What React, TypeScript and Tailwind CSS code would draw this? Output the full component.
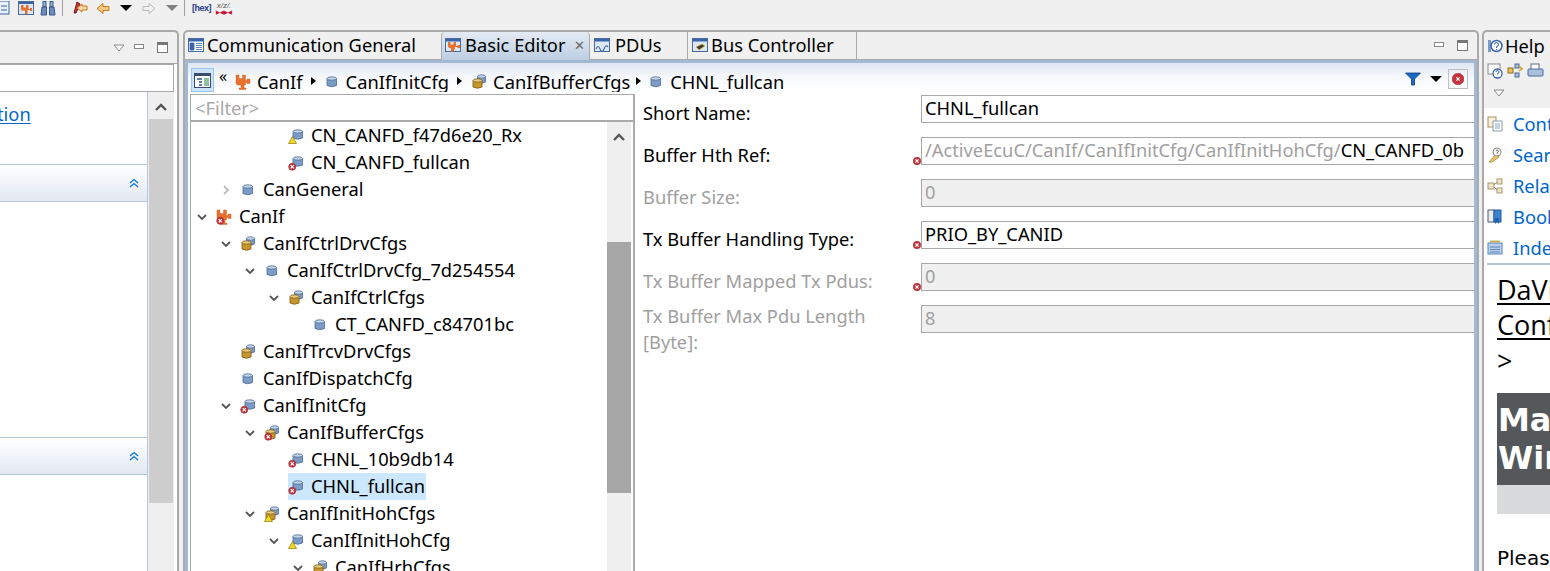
import React from 'react';

type IconKind = 'cyl' | 'multi' | 'module';
type Overlay = 'err' | 'warn' | undefined;

function ErrorDot({ x = 0, y = 8, size = 8 }: { x?: number; y?: number; size?: number }) {
  const c = size / 2;
  return (
    <g transform={`translate(${x} ${y})`}>
      <circle cx={c} cy={c} r={c - 0.2} fill="#c8323c" stroke="#9c2a32" strokeWidth="0.6" />
      <path d={`M${c - 1.6} ${c - 1.6}L${c + 1.6} ${c + 1.6}M${c + 1.6} ${c - 1.6}L${c - 1.6} ${c + 1.6}`} stroke="#fff" strokeWidth="1.2" />
    </g>
  );
}

function Cylinder({ x, y, w, h, body, top, line }: { x: number; y: number; w: number; h: number; body: string; top: string; line: string }) {
  return (
    <g>
      <path d={`M${x} ${y + 1.5}V${y + h - 1.5}Q${x + w / 2} ${y + h + 1} ${x + w} ${y + h - 1.5}V${y + 1.5}`} fill={body} stroke={line} strokeWidth="0.8" />
      <ellipse cx={x + w / 2} cy={y + 1.5} rx={w / 2} ry="1.7" fill={top} stroke={line} strokeWidth="0.8" />
    </g>
  );
}

function NodeIcon({ kind, overlay }: { kind: IconKind; overlay?: Overlay }) {
  return (
    <svg width="16" height="16" viewBox="0 0 16 16" className="shrink-0">
      {kind === 'cyl' && (
        overlay
          ? <Cylinder x={5} y={2} w={9.5} h={9.5} body="#7c9cc8" top="#c4d4e8" line="#4c6a94" />
          : <Cylinder x={3} y={3} w={9.5} h={10} body="#7c9cc8" top="#c4d4e8" line="#4c6a94" />
      )}
      {kind === 'multi' && (
        <>
          <Cylinder x={6.5} y={1} w={8} h={8.5} body="#7c9cc8" top="#c4d4e8" line="#4c6a94" />
          <Cylinder x={2} y={5} w={9} h={9.5} body="#c8962c" top="#e8cc7c" line="#7c5a14" />
        </>
      )}
      {kind === 'module' && (
        <path d="M1 1h3v3.500h3.500V1h3v5.500h1.500V5H15v4.500h-3V8.500h-1.500V11H9v3h2v1.500H4V14h2v-3H3a2 2 0 0 1-2-2Z" fill="#e8702c" stroke="#d06020" strokeWidth="0.4" />
      )}
      {overlay === 'err' && <ErrorDot x={0.5} y={8} size={7.5} />}
      {overlay === 'warn' && (
        <path d="M4.5 8.5L8.5 15.5H0.5Z" fill="#f4d820" stroke="#8c7a10" strokeWidth="0.7" />
      )}
    </svg>
  );
}

function Chevron({ open }: { open: boolean }) {
  return (
    <svg width="16" height="16" viewBox="0 0 16 16" className="shrink-0">
      {open
        ? <path d="M4 6l4 4 4-4" fill="none" stroke="#555" strokeWidth="1.8" />
        : <path d="M6 4l4 4-4 4" fill="none" stroke="#bbb" strokeWidth="1.8" />}
    </svg>
  );
}

const treeRows: { depth: number; label: string; icon: IconKind; overlay?: Overlay; arrow?: 'open' | 'closed'; selected?: boolean }[] = [
  { depth: 3, label: 'CN_CANFD_f47d6e20_Rx', icon: 'cyl', overlay: 'warn' },
  { depth: 3, label: 'CN_CANFD_fullcan', icon: 'cyl', overlay: 'err' },
  { depth: 1, label: 'CanGeneral', icon: 'cyl', arrow: 'closed' },
  { depth: 0, label: 'CanIf', icon: 'module', overlay: 'err', arrow: 'open' },
  { depth: 1, label: 'CanIfCtrlDrvCfgs', icon: 'multi', arrow: 'open' },
  { depth: 2, label: 'CanIfCtrlDrvCfg_7d254554', icon: 'cyl', arrow: 'open' },
  { depth: 3, label: 'CanIfCtrlCfgs', icon: 'multi', arrow: 'open' },
  { depth: 4, label: 'CT_CANFD_c84701bc', icon: 'cyl' },
  { depth: 1, label: 'CanIfTrcvDrvCfgs', icon: 'multi' },
  { depth: 1, label: 'CanIfDispatchCfg', icon: 'cyl' },
  { depth: 1, label: 'CanIfInitCfg', icon: 'cyl', overlay: 'err', arrow: 'open' },
  { depth: 2, label: 'CanIfBufferCfgs', icon: 'multi', overlay: 'err', arrow: 'open' },
  { depth: 3, label: 'CHNL_10b9db14', icon: 'cyl', overlay: 'err' },
  { depth: 3, label: 'CHNL_fullcan', icon: 'cyl', overlay: 'err', selected: true },
  { depth: 2, label: 'CanIfInitHohCfgs', icon: 'multi', overlay: 'warn', arrow: 'open' },
  { depth: 3, label: 'CanIfInitHohCfg', icon: 'cyl', overlay: 'warn', arrow: 'open' },
  { depth: 4, label: 'CanIfHrhCfgs', icon: 'multi', arrow: 'open' },
];

// tree indent is one of these per depth, 24px each
const indentClass = ['pl-[3px]', 'pl-[27px]', 'pl-[51px]', 'pl-[75px]', 'pl-[99px]'];

const fields: { label: string; disabled?: boolean; error?: boolean; value?: string; ref?: boolean; twoLine?: boolean }[] = [
  { label: 'Short Name:', value: 'CHNL_fullcan' },
  { label: 'Buffer Hth Ref:', error: true, ref: true },
  { label: 'Buffer Size:', disabled: true, value: '0' },
  { label: 'Tx Buffer Handling Type:', error: true, value: 'PRIO_BY_CANID' },
  { label: 'Tx Buffer Mapped Tx Pdus:', disabled: true, error: true, value: '0' },
  { label: 'Tx Buffer Max Pdu Length [Byte]:', disabled: true, value: '8', twoLine: true },
];

function ViewMenu() {
  return (
    <svg width="12" height="8" viewBox="0 0 12 8" className="shrink-0">
      <path d="M1 1h10L6 7Z" fill="#fff" stroke="#888" />
    </svg>
  );
}

function WindowButtons() {
  return (
    <div className="flex items-center gap-[13px]">
      <div className="w-[10px] h-[5px] border border-[#888] bg-white mb-[3px]" />
      <div className="w-[11px] h-[11px] border border-[#777] border-t-[3px] bg-white" />
    </div>
  );
}

function UpArrow() {
  return (
    <svg width="14" height="10" viewBox="0 0 14 10">
      <path d="M2 8l5-5 5 5" fill="none" stroke="#555" strokeWidth="2.4" />
    </svg>
  );
}

function TabIcon({ accent }: { accent: 'list' | 'module' | 'wave' | 'chip' }) {
  return (
    <svg width="16" height="16" viewBox="0 0 16 16" className="shrink-0">
      <rect x="0.5" y="1.5" width="15" height="13" fill={accent === 'list' ? '#fff' : '#dce8f6'} stroke="#4a6a9c" />
      <rect x="1" y="2" width="14" height="2.5" fill="#3a64ac" />
      {accent === 'list' && <path d="M2 6h4v7H2ZM8 6.5h6M8 8.5h6M8 10.5h6M8 12.5h6" fill="#3a64ac" stroke="#3a64ac" strokeWidth="0.8" />}
      {accent === 'module' && <path d="M3 5h2.500v2.500h3V5H11v4h1.500v-1H15v3h-2.500v-1H10v2H9v2.500H6V11H5a2 2 0 0 1-2-2Z" fill="#e8702c" />}
      {accent === 'wave' && <path d="M2 12q2-5 4 0t4 0 4-2" fill="none" stroke="#4a6a9c" strokeWidth="1.2" />}
      {accent === 'chip' && <path d="M4 10l6-3 3 2-6 4Z" fill="#3c3c3c" stroke="#e8c020" strokeWidth="0.7" />}
    </svg>
  );
}

function Crumb({ icon, label }: { icon: IconKind; label: string }) {
  return (
    <div className="flex items-center shrink-0 mt-px">
      <NodeIcon kind={icon} />
      <span className="ml-[6px]">{label}</span>
    </div>
  );
}

function CrumbArrow({ className }: { className: string }) {
  return <div className={`w-0 h-0 border-y-[4px] border-y-transparent border-l-[5px] border-l-black shrink-0 ${className}`} />;
}

function SectionHeader() {
  return (
    <div className="h-[37px] shrink-0 flex items-center justify-end pr-[8px] bg-gradient-to-b from-white to-[#e2e9f3] border-b border-[#b4c8dc]">
      <svg width="10" height="10" viewBox="0 0 10 10">
        <path d="M1 5l4-3.5L9 5M1 9l4-3.5L9 9" fill="none" stroke="#0a78dc" strokeWidth="1.3" />
      </svg>
    </div>
  );
}

function HelpItemIcon({ name }: { name: string }) {
  return (
    <svg width="16" height="16" viewBox="0 0 16 16" className="shrink-0">
      {name === 'Contents' && (
        <>
          <rect x="1" y="1" width="8" height="10" fill="#f8f0dc" stroke="#a89060" />
          <rect x="6" y="5" width="9" height="10" fill="#fff" stroke="#8c9cb0" />
          <path d="M8 8h5M8 10h5M8 12h5" stroke="#8ca8c8" />
        </>
      )}
      {name === 'Search' && (
        <>
          <path d="M2 15L9 7l3 3-7 5Z" fill="#e8c870" stroke="#a88830" strokeWidth="0.8" />
          <circle cx="10" cy="5" r="4" fill="#fff" stroke="#8c8c7c" />
          <path d="M9 4a1.200 1.200 0 1 1 1.200 1.500V6.500" fill="none" stroke="#556" />
        </>
      )}
      {name === 'Related Topics' && (
        <>
          <rect x="1" y="5" width="6" height="6" fill="#f0e4c4" stroke="#a89870" />
          <rect x="10" y="1" width="5" height="5" fill="#f0e4c4" stroke="#a89870" />
          <rect x="10" y="10" width="5" height="5" fill="#f0e4c4" stroke="#a89870" />
          <path d="M7 7l3-3M7 9l3 3" stroke="#888" />
        </>
      )}
      {name === 'Bookmarks' && (
        <>
          <rect x="1" y="1" width="6" height="12" fill="#e8ecf0" stroke="#556" />
          <rect x="7" y="1" width="7" height="12" fill="#3a84d0" stroke="#285c98" />
          <path d="M8 9v6l2-2 2 2V9Z" fill="#1a64b8" />
        </>
      )}
      {name === 'Index' && (
        <>
          <rect x="1" y="3" width="14" height="11" fill="#b8d0ec" stroke="#5a84b8" />
          <path d="M3 1.500h10" stroke="#c8b060" strokeWidth="2" />
          <path d="M3 7h10M3 9.500h10M3 12h10" stroke="#5a84b8" />
        </>
      )}
    </svg>
  );
}

export default function App() {
  return (
    <div className="w-[1550px] h-[571px] overflow-hidden bg-[#f0f0f0] flex flex-col font-['Noto_Sans',sans-serif] text-[18.3px] text-black">
      {/* top toolbar, cut off by the screen edge */}
      <div className="h-[30px] shrink-0 flex items-start">
        <div className="flex items-center h-[16px]">
          <svg width="10" height="15" viewBox="0 0 10 15"><rect x="-4" y="0" width="13" height="13" fill="#e8f0fa" stroke="#3a64ac" /><path d="M1 5h6M1 9h6" stroke="#3a64ac" /></svg>
          <svg width="16" height="15" viewBox="0 0 16 15" className="ml-[8px]"><rect x="0.5" y="0.5" width="15" height="13" fill="#dce8f6" stroke="#4a6a9c" /><rect x="1" y="1" width="14" height="2" fill="#3a64ac" /><path d="M3 4h2.500v2.500h2.500V4h2.500v4H12V7h2v3h-2V9H9.500v4H7V9.500H3Z" fill="#e8702c" /></svg>
          <svg width="16" height="15" viewBox="0 0 16 15" className="ml-[6px]"><path d="M2 6h4.500v8H1ZM9.500 6H14l1 8H9.500Z" fill="#6a8cc0" stroke="#3a5a8c" /><rect x="3" y="0.5" width="3" height="5" fill="#9ab4d8" stroke="#3a5a8c" /><rect x="10" y="0.5" width="3" height="5" fill="#9ab4d8" stroke="#3a5a8c" /></svg>
          <div className="w-px h-[16px] bg-[#a0a0a0] ml-[6px]" />
          <svg width="17" height="15" viewBox="0 0 17 15" className="ml-[8px]"><path d="M3 12L6 1l3 2-4 9Z" fill="#c8323c" stroke="#7c1a20" /><path d="M6 7l5-4v2h5v4h-5v2Z" fill="#f8d8a0" stroke="#c87820" /></svg>
          <svg width="14" height="13" viewBox="0 0 14 13" className="ml-[8px]"><path d="M1 6.500l6-5v3h6v4H7v3Z" fill="#f8c880" stroke="#d07818" /></svg>
          <div className="ml-[10px] w-0 h-0 border-x-[6px] border-x-transparent border-t-[6px] border-t-black" />
          <svg width="14" height="13" viewBox="0 0 14 13" className="ml-[10px]"><path d="M13 6.500l-6-5v3H1v4h6v3Z" fill="#f0f0f0" stroke="#b8b8b8" /></svg>
          <div className="ml-[10px] w-0 h-0 border-x-[6px] border-x-transparent border-t-[6px] border-t-[#808080]" />
          <div className="w-px h-[16px] bg-[#a0a0a0] ml-[6px]" />
          <span className="ml-[7px] font-['Liberation_Sans',sans-serif] text-[9px] tracking-[-0.5px] leading-[14px] text-[#2a3a8c] font-bold whitespace-nowrap">[hex]</span>
          <div className="ml-[5px] flex flex-col items-center leading-none">
            <span className="font-['Liberation_Sans',sans-serif] italic text-[8px] leading-[9px] text-[#555]">x/z/.</span>
            <span className="text-[5px] leading-[5px] text-[#c01030] font-bold">▶◀▶◀</span>
          </div>
        </div>
      </div>

      <div className="flex-1 min-h-0 flex">
        {/* left view */}
        <div className="w-[179px] shrink-0 border-t-2 border-r-2 border-[#aaa] rounded-tr-[5px] flex flex-col">
          <div className="h-[31px] shrink-0 flex items-center justify-end pr-[9px] gap-[9px]">
            <ViewMenu />
            <WindowButtons />
          </div>
          <div className="flex-1 min-h-0 bg-white border-t border-[#a8a8a8] pr-[3px] flex flex-col">
            <div className="h-[28px] shrink-0 border border-[#a8a8a8] border-l-0 bg-white" />
            <div className="flex-1 min-h-0 flex">
              <div className="w-[148px] flex flex-col border-r border-[#b4c8dc]">
                <div className="h-[73px] shrink-0 border-b border-[#b4c8dc] pt-[9px] text-[#0066cc] leading-[26px]">
                  <span className="underline underline-offset-2 ml-[-3px]">tion</span>
                </div>
                <SectionHeader />
                <div className="h-[236px] shrink-0 border-b border-[#b4c8dc]" />
                <SectionHeader />
                <div className="flex-1" />
              </div>
              <div className="w-[26px] bg-[#efefef] flex flex-col">
                <div className="h-[27px] shrink-0 flex items-center justify-center pt-[2px]"><UpArrow /></div>
                <div className="h-[384px] shrink-0 bg-[#cdcdcd] mx-px" />
              </div>
            </div>
          </div>
        </div>

        {/* center editor */}
        <div className="w-[1296px] ml-[4px] shrink-0 border-t-2 border-x-2 border-[#aaa] rounded-t-[5px] flex flex-col">
          <div className="h-[28px] shrink-0 flex items-stretch leading-[26px]">
            <div className="w-[256px] flex items-center pb-[2px] pl-[3px] gap-[3px] border-b border-[#aaa]">
              <TabIcon accent="list" /><span>Communication General</span>
            </div>
            <div className="w-[149px] flex items-center pb-[2px] pl-[3px] gap-[4px] bg-gradient-to-b from-[#e4ebf4] to-[#bccee2] border-x border-[#aaa] rounded-t-[4px]">
              <TabIcon accent="module" /><span>Basic Editor</span>
              <span className="ml-[5px] text-[#666] text-[13px]">✕</span>
            </div>
            <div className="w-[97px] flex items-center pb-[2px] pl-[4px] gap-[5px] border-b border-[#aaa]">
              <TabIcon accent="wave" /><span>PDUs</span>
            </div>
            <div className="w-[170px] flex items-center pb-[2px] pl-[4px] gap-[3px] border-x border-b border-[#aaa]">
              <TabIcon accent="chip" /><span>Bus Controller</span>
            </div>
            <div className="flex-1 flex items-center justify-end pr-[9px] border-b border-[#aaa]">
              <WindowButtons />
            </div>
          </div>
          <div className="flex-1 min-h-0 flex flex-col bg-white border-x-[3px] border-t-[3px] border-[#a3b9d3]">
            {/* breadcrumb, its text is cut by the filter row in the real app */}
            <div className="h-[29px] mb-[2px] shrink-0 overflow-hidden bg-gradient-to-b from-[#dfe7f2] via-[#f6f8fb] to-white flex items-start pt-[5px] pl-[3px] pr-[6px] leading-[26px] whitespace-nowrap">
              <div className="w-[23px] h-[24px] shrink-0 bg-[#cde3f8] border border-[#9cc6ee] flex items-center justify-center">
                <svg width="17" height="15" viewBox="0 0 17 15"><rect x="0.500" y="0.500" width="16" height="14" fill="#fff" stroke="#3c4c6c" /><rect x="1" y="1" width="15" height="2" fill="#3c4c6c" /><path d="M3 5h5v2H3ZM5 8h3v2H5ZM5 11h3v2H5Z" fill="#5a7ca8" /><rect x="10" y="5" width="5" height="8" fill="#8cc0a0" /></svg>
              </div>
              <span className="ml-[5px] mt-[-3px] w-[12px] shrink-0 text-[16px] leading-[22px]">«</span>
              <div className="ml-[4px] shrink-0"><Crumb icon="module" label="CanIf" /></div>
              <CrumbArrow className="ml-[8px] mt-[9px]" />
              <div className="ml-[8px] shrink-0"><Crumb icon="cyl" label="CanIfInitCfg" /></div>
              <CrumbArrow className="ml-[8px] mt-[9px]" />
              <div className="ml-[9px] shrink-0"><Crumb icon="multi" label="CanIfBufferCfgs" /></div>
              <CrumbArrow className="ml-[6px] mt-[9px]" />
              <div className="ml-[7px] shrink-0"><Crumb icon="cyl" label="CHNL_fullcan" /></div>
              <div className="flex-1" />
              <svg width="16" height="14" viewBox="0 0 16 14" className="mt-[4px] shrink-0"><path d="M0.500 1h15l-6 6v6H6.500V7Z" fill="#1a6ac0" stroke="#0c3c80" strokeWidth="0.8" /></svg>
              <div className="ml-[9px] mt-[8px] shrink-0 w-0 h-0 border-x-[6px] border-x-transparent border-t-[6px] border-t-black" />
              <div className="ml-[6px] shrink-0 mt-px w-[20px] h-[20px] border border-[#c0c0c0] flex items-center justify-center">
                <svg width="12" height="12" viewBox="0 0 12 12"><ErrorDot x={0} y={0} size={12} /></svg>
              </div>
            </div>
            <div className="flex-1 min-h-0 flex bg-white">
              {/* tree */}
              <div className="w-[445px] shrink-0 ml-[2px] flex flex-col border-r-2 border-[#aaa]">
                <div className="h-[28px] shrink-0 border-t border-l border-[#aaa] border-b-2 text-[#a8a8a8] leading-[25px] pl-[4px]">&lt;Filter&gt;</div>
                <div className="flex-1 min-h-0 flex">
                  <div className="flex-1 min-w-0 overflow-hidden whitespace-nowrap border-l border-[#aaa]">
                    {treeRows.map((row) => (
                      <div key={row.label} className={`h-[27px] flex items-center ${indentClass[row.depth]}`}>
                        {row.arrow ? <Chevron open={row.arrow === 'open'} /> : <div className="w-[16px] shrink-0" />}
                        <div className={`ml-[6px] flex items-center h-[27px] ${row.selected ? 'bg-[#cce8ff] pr-[1px]' : ''}`}>
                          <NodeIcon kind={row.icon} overlay={row.overlay} />
                          <span className="ml-[7px] leading-[25px] mb-[2px]">{row.label}</span>
                        </div>
                      </div>
                    ))}
                  </div>
                  <div className="w-[24px] shrink-0 mr-[2px] bg-[#efefef] flex flex-col">
                    <div className="h-[30px] flex items-center justify-center"><UpArrow /></div>
                    <div className="h-[90px] shrink-0" />
                    <div className="h-[251px] shrink-0 bg-[#a6a6a6]" />
                  </div>
                </div>
              </div>
              {/* form */}
              <div className="flex-1 min-w-0 flex flex-col pt-px pl-[8px] overflow-hidden">
                {fields.map((f) => (
                  <div key={f.label} className="flex h-[28px] mb-[14px] shrink-0 relative">
                    <div className={`w-[278px] shrink-0 pr-[30px] leading-[26px] ${f.twoLine ? 'mt-[-2px]' : 'pt-[5px]'} ${f.disabled ? 'text-[#a0a0a0]' : ''}`}>{f.label}</div>
                    <div className={`flex-1 min-w-0 h-[28px] border border-r-0 border-[#a8a8a8] pl-[3px] leading-[24px] whitespace-nowrap overflow-hidden ${f.disabled ? 'bg-[#f0f0f0] text-[#a0a0a0]' : 'bg-white'}`}>
                      {f.ref ? <><span className="text-[#a0a0a0]">/ActiveEcuC/CanIf/CanIfInitCfg/CanIfInitHohCfg/</span>CN_CANFD_0b</> : f.value}
                    </div>
                    {f.error && (
                      <svg width="8" height="8" viewBox="0 0 8 8" className="absolute left-[270px] bottom-[0px]"><ErrorDot x={0} y={0} size={8} /></svg>
                    )}
                  </div>
                ))}
              </div>
            </div>
          </div>
        </div>

        {/* help view */}
        <div className="flex-1 min-w-0 ml-[3px] border-t-2 border-l-2 border-[#aaa] rounded-tl-[5px] flex flex-col whitespace-nowrap overflow-hidden">
          <div className="h-[28px] shrink-0 flex items-center pl-[3px] gap-[2px]">
            <svg width="16" height="16" viewBox="0 0 16 16"><rect x="1" y="2" width="3" height="12" fill="#7c9cc8" /><circle cx="9.500" cy="8" r="5.500" fill="#fff" stroke="#3a64ac" strokeWidth="1.5" /><path d="M7.500 6.500a2 2 0 1 1 2 2v1.500M9.500 11v1" fill="none" stroke="#3a64ac" /></svg>
            <span>Help</span>
          </div>
          <div className="h-[22px] shrink-0 flex items-center pl-[3px] gap-[3px]">
            <svg width="17" height="16" viewBox="0 0 17 16"><rect x="1" y="1" width="12" height="10" fill="#fff" stroke="#888" /><circle cx="10.500" cy="10.500" r="4.500" fill="#fff" stroke="#3a64ac" strokeWidth="1.3" /><path d="M9 9a1.500 1.500 0 1 1 1.500 1.500v1" fill="none" stroke="#3a64ac" /></svg>
            <svg width="17" height="16" viewBox="0 0 17 16"><rect x="1" y="5" width="5" height="5" fill="#e8c050" stroke="#8c7020" /><rect x="8" y="1" width="4" height="4" fill="#a8c0e0" stroke="#4a6a9c" /><rect x="8" y="10" width="4" height="4" fill="#a8c0e0" stroke="#4a6a9c" /><path d="M12 3l3 3-3 2" fill="none" stroke="#d0a020" strokeWidth="1.5" /></svg>
            <svg width="17" height="16" viewBox="0 0 17 16"><rect x="4" y="1" width="8" height="6" fill="#fff" stroke="#667" /><rect x="1" y="6" width="15" height="7" rx="1" fill="#a8c0dc" stroke="#4a6a9c" /></svg>
          </div>
          <div className="h-[26px] shrink-0 pl-[9px] pt-[7px]">
            <ViewMenu />
          </div>
          <div className="flex-1 min-h-0 bg-white pl-[3px] overflow-hidden">
            <div className="h-[157px] flex flex-col border-b-2 border-[#b8c0c8] text-[#0066cc]">
              {['Contents', 'Search', 'Related Topics', 'Bookmarks', 'Index'].map((t) => (
                <div key={t} className="h-[31px] shrink-0 flex items-center gap-[10px]">
                  <HelpItemIcon name={t} />
                  <span className="leading-[31px]">{t}</span>
                </div>
              ))}
            </div>
            <div className="pl-[10px] font-['DejaVu_Sans',sans-serif]">
              <div className="mt-[7px] text-[27px] leading-[35px] underline decoration-2 underline-offset-[3px] font-['Open_Sans',sans-serif]">DaVinci</div>
              <div className="text-[27px] leading-[35px] underline decoration-2 underline-offset-[3px] font-['Open_Sans',sans-serif]">Configurator</div>
              <div className="text-[27px] leading-[38px] font-['Open_Sans',sans-serif]">&gt;</div>
              <div className="mt-[13px] h-[92px] bg-[#55585a] text-white font-bold text-[32px] leading-[38px] pt-[8px] pl-[1px]">
                <div>Main</div>
                <div>Window</div>
              </div>
              <div className="h-[29px] bg-[#d8dadc]" />
              <div className="mt-[31px] text-[20px] leading-[26px]">Please</div>
            </div>
          </div>
        </div>
      </div>
    </div>
  );
}
